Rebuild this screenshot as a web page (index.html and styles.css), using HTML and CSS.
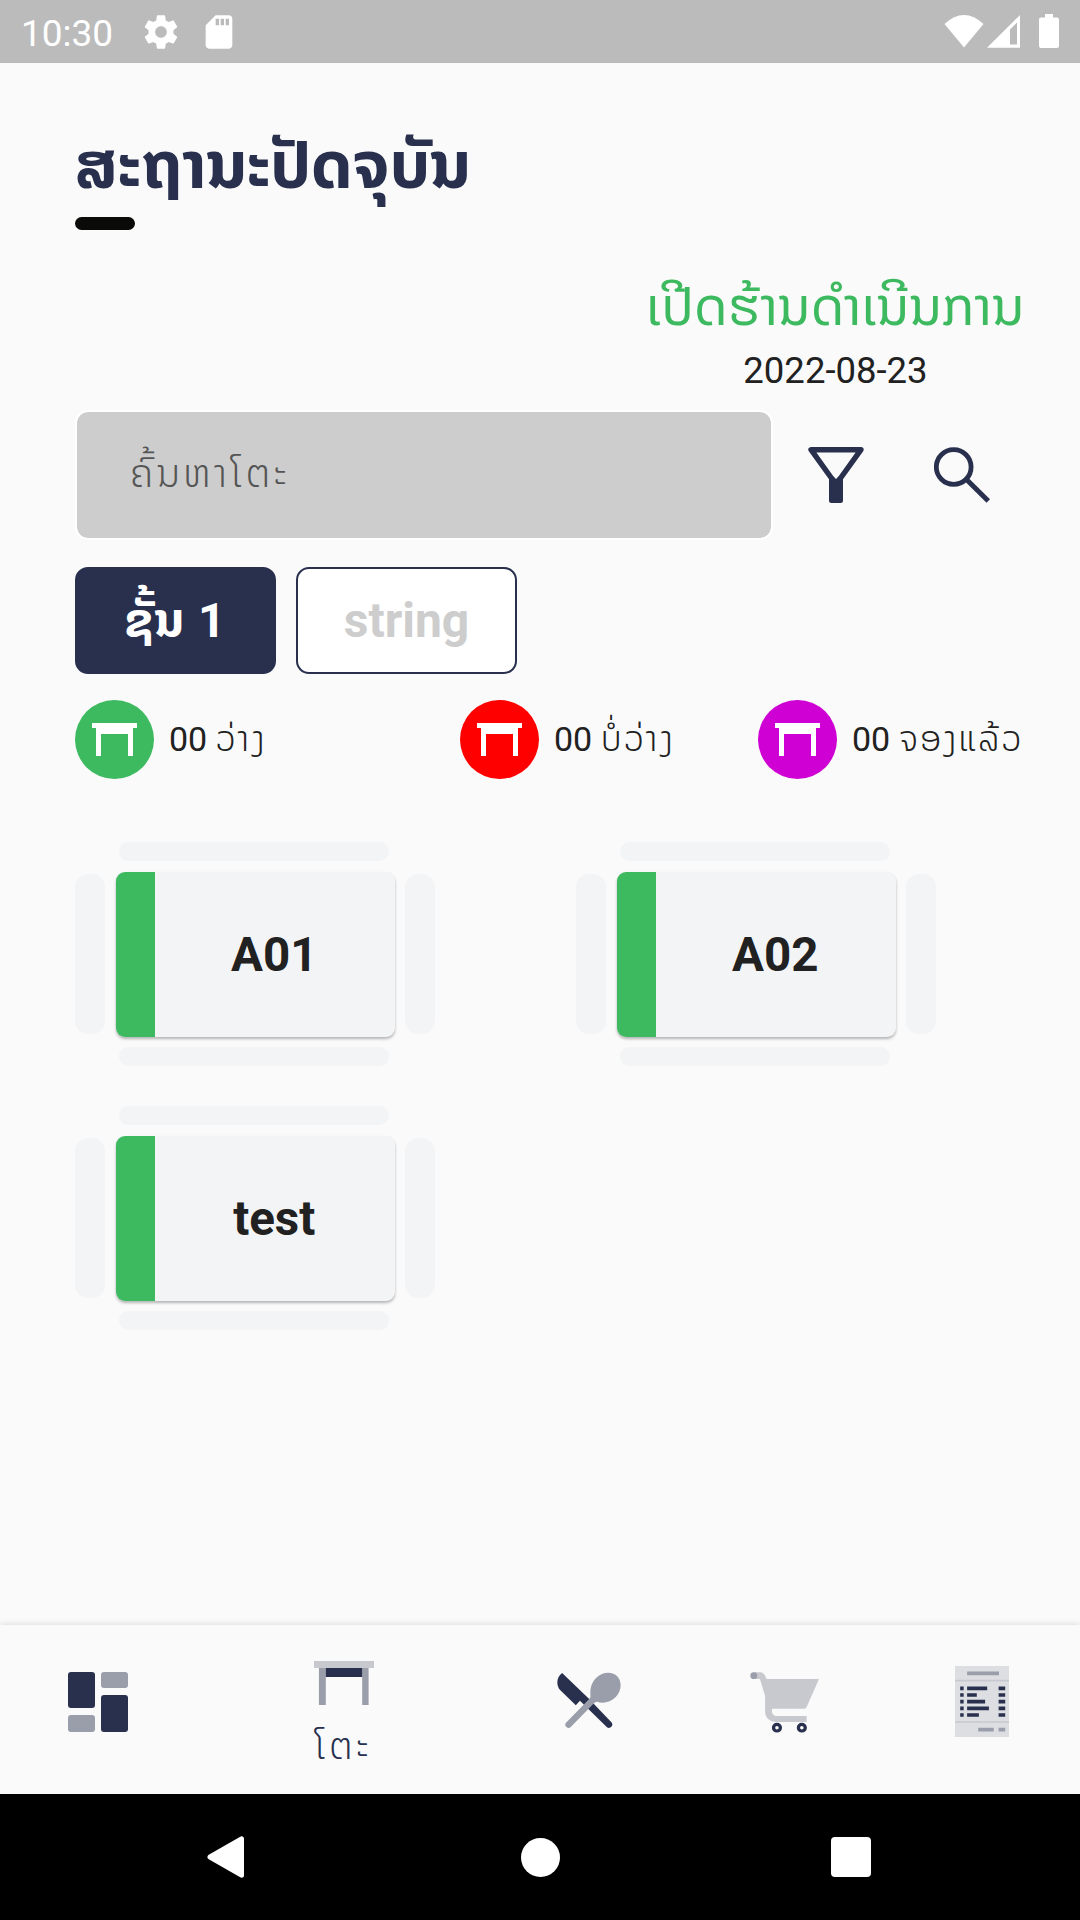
FILE: index.html
```html
<!DOCTYPE html>
<html lang="lo">
<head>
<meta charset="utf-8">
<title>ສະຖານະປັດຈຸບັນ</title>
<link rel="stylesheet" href="styles.css">
</head>
<body>
<svg width="0" height="0" class="defs">
  <symbol id="table" viewBox="0 0 45 33"><path d="M0 0H45V5H41V33H36V11H9V33H4V5H0z" fill="#fff"/></symbol>
</svg>
<div class="screen">
  <header class="status">
    <span class="clock">10:30</span>
    <svg class="gear" width="40" height="40" viewBox="0 0 24 24"><path fill="#fff" d="M19.43 12.98c.04-.32.07-.64.07-.98s-.03-.66-.07-.98l2.11-1.65c.19-.15.24-.42.12-.64l-2-3.46c-.12-.22-.39-.3-.61-.22l-2.49 1c-.52-.4-1.08-.73-1.69-.98l-.38-2.65C14.46 2.18 14.25 2 14 2h-4c-.25 0-.46.18-.49.42l-.38 2.65c-.61.25-1.17.59-1.69.98l-2.49-1c-.23-.09-.49 0-.61.22l-2 3.46c-.13.22-.07.49.12.64l2.11 1.65c-.04.32-.07.65-.07.98s.03.66.07.98l-2.11 1.65c-.19.15-.24.42-.12.64l2 3.46c.12.22.39.3.61.22l2.49-1c.52.4 1.08.73 1.69.98l.38 2.65c.03.24.24.42.49.42h4c.25 0 .46-.18.49-.42l.38-2.65c.61-.25 1.17-.59 1.69-.98l2.49 1c.23.09.49 0 .61-.22l2-3.46c.12-.22.07-.49-.12-.64l-2.11-1.65zM12 15.5c-1.93 0-3.5-1.57-3.5-3.5s1.57-3.5 3.5-3.5 3.5 1.57 3.5 3.5-1.57 3.5-3.5 3.5z"/></svg>
    <svg class="card-icon" width="40" height="40" viewBox="0 0 24 24"><path fill="#fff" d="M18 2h-8L4.02 8 4 20c0 1.100.9 2 2 2h12c1.100 0 2-.9 2-2V4c0-1.100-.9-2-2-2zm-6 6h-2V4h2v4zm3 0h-2V4h2v4zm3 0h-2V4h2v4z"/></svg>
    <svg class="signals" width="116" height="36" viewBox="0 0 116 36"><g fill="#fff"><path d="M0.500 10Q20-8 39.500 10L20 33.500z"/><path fill-rule="evenodd" d="M43 33.700L76 1V33.700zM66 15.500V30.500H73V8.500z"/><path d="M101 0H109V3.500H113Q115 3.500 115 5.500V32Q115 34 113 34H97Q95 34 95 32V5.500Q95 3.500 97 3.500H101z"/></g></svg>
  </header>

  <main class="content">
    <h1 class="title"><span>ສະຖານະປັດຈຸບັນ</span></h1>
    <div class="title-rule"></div>

    <section class="shop">
      <p class="shop-state"><span>ເປີດຮ້ານດຳເນີນການ</span></p>
      <p class="shop-date">2022-08-23</p>
    </section>

    <section class="search">
      <div class="search-box"><span class="lao">ຄົ້ນຫາໂຕະ</span></div>
      <svg class="filter" width="56" height="56" viewBox="0 0 56 56"><path d="M3 2.700H53L33 30.500L28 36L23 30.500z" fill="none" stroke="#28304e" stroke-width="5.400" stroke-linejoin="round"/><path d="M21 31L28 33L35 31V53.500Q35 56 32.500 56H23.500Q21 56 21 53.500z" fill="#28304e"/></svg>
      <svg class="find" width="56" height="56" viewBox="0 0 56 56"><circle cx="19.700" cy="20" r="17.400" fill="none" stroke="#28304e" stroke-width="4.800"/><path d="M32 32L54.300 54" stroke="#28304e" stroke-width="5"/></svg>
    </section>

    <section class="floors">
      <div class="floor active"><span>ຊັ້ນ 1</span></div>
      <div class="floor"><span>string</span></div>
    </section>

    <section class="legend">
      <div class="legend-item"><i class="dot free"><svg width="45" height="33"><use href="#table"/></svg></i><span>00 <span class="lao">ວ່າງ</span></span></div>
      <div class="legend-item"><i class="dot busy"><svg width="45" height="33"><use href="#table"/></svg></i><span>00 <span class="lao">ບໍ່ວ່າງ</span></span></div>
      <div class="legend-item"><i class="dot booked"><svg width="45" height="33"><use href="#table"/></svg></i><span>00 <span class="lao">ຈອງແລ້ວ</span></span></div>
    </section>

    <section class="tables">
      <div class="table"><b class="seat top"></b><b class="seat left"></b><div class="desk"><i></i><span>A01</span></div><b class="seat right"></b><b class="seat bottom"></b></div>
      <div class="table"><b class="seat top"></b><b class="seat left"></b><div class="desk"><i></i><span>A02</span></div><b class="seat right"></b><b class="seat bottom"></b></div>
      <div class="table"><b class="seat top"></b><b class="seat left"></b><div class="desk"><i></i><span>test</span></div><b class="seat right"></b><b class="seat bottom"></b></div>
    </section>
  </main>

  <nav class="tabs">
    <div class="tab">
      <svg width="60" height="60" viewBox="0 0 60 60"><g fill="#28304e"><rect width="27" height="36" rx="3"/><rect x="33" y="23" width="27" height="37" rx="3"/></g><g fill="#9a9eab"><rect x="33" width="27" height="16" rx="3"/><rect y="43" width="27" height="17" rx="3"/></g></svg>
    </div>
    <div class="tab current">
      <svg width="60" height="44" viewBox="0 0 61 44" preserveAspectRatio="none"><path d="M5 6H12V44H5zM49 6H55.500V44H49z" fill="#9a9eab"/><path d="M12 6H49V16H12z" fill="#28304e"/><path d="M0 0H61V7H0z" fill="#c8c9cf"/></svg>
      <span class="lao">ໂຕະ</span>
    </div>
    <div class="tab">
      <svg class="utensils" width="64" height="57" viewBox="49 187 187 171" preserveAspectRatio="none"><path d="M64 190L143 268L208 338C216 347 205 360 195 353L116 273L104 287L58 241C46 226 47 203 64 190z" fill="#28304e"/><path d="M83 345L155 269" stroke="#9a9eab" stroke-width="19" stroke-linecap="round"/><path d="M147 262C145 243 147 222 163 205C182 185 211 184 225 200C239 215 239 243 220 263C206 278 183 283 166 276L154 280L143 270z" fill="#9a9eab"/></svg>
    </div>
    <div class="tab">
      <svg class="cart" width="69" height="61" viewBox="610 183 201 183" preserveAspectRatio="none"><path d="M621 184H640Q653 185 658 204H811L775 288Q773 293 768 293H674V300Q674 314 686 315H775V333H686Q656 330 654 305V255L639 204H621z" fill="#c8c9cf"/><circle cx="621" cy="194" r="10" fill="#9a9eab"/><g fill="#fafafa" stroke="#28304e" stroke-width="9.500"><circle cx="688.500" cy="350" r="10"/><circle cx="761" cy="350" r="10"/></g></svg>
    </div>
    <div class="tab">
      <svg class="receipt" width="54" height="71" viewBox="1205 168 156 213" preserveAspectRatio="none"><path d="M1205 168H1361V381H1205z" fill="#dddee2"/><path d="M1205 212H1361M1205 336H1361" stroke="#c8c9cf" stroke-width="5"/><path d="M1240 190H1332M1272 359H1317M1331 359H1350" stroke="#9a9eab" stroke-width="11"/><path d="M1220 235h10M1240 235h58M1331 235h19M1220 255h10M1240 255h28M1331 255h19M1220 275h10M1240 275h52M1331 275h19M1220 295h10M1240 295h63M1331 295h19M1220 315h10M1240 315h34M1331 315h19" stroke="#28304e" stroke-width="11"/></svg>
    </div>
  </nav>

  <footer class="system">
    <svg width="38" height="42" viewBox="0 0 38 42"><path d="M3 21L34.500 2.800V39.200z" fill="#fff" stroke="#fff" stroke-width="5" stroke-linejoin="round"/></svg>
    <i class="home"></i>
    <i class="recent"></i>
  </footer>
</div>
</body>
</html>
```
FILE: styles.css
```css
* { box-sizing: border-box; margin: 0; padding: 0; }
body { font-family: Roboto, "Noto Sans Lao", sans-serif; color: #212121; background: #fafafa; }
svg { display: block; flex: none; }
.defs { display: none; }
.screen { width: 1080px; height: 1920px; display: flex; flex-direction: column; overflow: hidden; }

.status { height: 63px; flex: none; background: #bbb; display: flex; align-items: center; padding: 0 20px 0 21px; color: #fff; }
.clock { font-size: 37px; line-height: 63px; width: 120px; padding-top: 3px; }
.card-icon { margin-left: 18px; }
.signals { margin-left: auto; }

.content { flex: 1; padding: 57px 58px 0 75px; display: flex; flex-direction: column; }
.content span, .tab span { white-space: nowrap; }
.lao { font-weight: 350; letter-spacing: 2.500px; }
.title { height: 97px; line-height: 91px; font-size: 65.500px; letter-spacing: 0.300px; font-weight: 700; color: #28304e; }
.title-rule { width: 60px; height: 13px; border-radius: 7px; background: #0a0a08; }
.shop { align-self: flex-end; width: 373px; margin-top: 40px; text-align: center; }
.shop-state { height: 72px; line-height: 74px; font-size: 53px; letter-spacing: 0.150px; color: #3dba5f; display: flex; justify-content: center; }
.shop-date { height: 56px; line-height: 58px; font-size: 36.500px; }

.search { display: flex; align-items: center; margin-top: 12px; }
.search-box { width: 698px; height: 130px; border: 2.500px solid #fff; border-radius: 13px; background: #cdcdcd; background-clip: padding-box; padding-left: 53px; font-size: 39px; line-height: 125px; color: #555; }
.search-box .lao { letter-spacing: 3.300px; }
.filter { margin-left: 35px; }
.find { margin-left: 70px; }

.floors { display: flex; gap: 20px; margin-top: 27px; }
.floor { width: 221px; height: 107px; border: 2px solid #28304e; border-radius: 13px; background: #fff; color: #cdcdcd; font-size: 48px; font-weight: 700; line-height: 104px; text-align: center; }
.floor.active { width: 201px; background: #28304e; color: #fff; letter-spacing: 1px; }

.legend { display: flex; margin-top: 26px; }
.legend-item { display: flex; flex: none; align-items: center; gap: 15px; font-size: 34px; line-height: 79px; }
.legend-item .lao { font-size: 35px; }
.legend-item:nth-child(1) { width: 385px; }
.legend-item:nth-child(2) { width: 298px; }
.legend-item:nth-child(3) .lao { letter-spacing: 2px; }
.dot { width: 79px; height: 79px; border-radius: 50%; display: flex; align-items: center; justify-content: center; flex: none; }
.free { background: #3dba5f; }
.busy { background: #f00; }
.booked { background: #cf00d3; }

.tables { display: grid; grid-template-columns: 501px 1fr; row-gap: 40px; margin-top: 63px; }
.table { width: 360px; display: grid; grid-template: ". top ." 19px "left desk right" 166px ". bottom ." 19px / 30px 280px 30px; gap: 10px; align-items: center; }
.seat { background: #f3f4f6; border-radius: 13px; }
.top, .bottom { width: 270px; height: 19px; margin-left: 3.500px; border-radius: 9.500px; }
.top { grid-area: top; }
.bottom { grid-area: bottom; }
.left { grid-area: left; }
.right { grid-area: right; }
.left, .right { height: 160px; }
.desk { grid-area: desk; height: 165px; margin: 1px 0.500px 0 1px; border-radius: 9px; background: #f3f4f6; display: flex; overflow: hidden; box-shadow: 0 2px 3px rgba(0,0,0,.28); }
.desk i { width: 39px; background: #3dba5f; }
.desk span { flex: 1; text-align: center; font-size: 47.500px; font-weight: 700; line-height: 166px; padding-right: 1px; }

.tabs { height: 169px; flex: none; display: flex; background: #fafafa; box-shadow: 0 -1px 6px rgba(0,0,0,.12); }
.tab { width: 196px; display: flex; flex-direction: column; align-items: center; padding-top: 47px; }
.tab.current { width: 295px; padding-top: 36px; }
.tab span { font-size: 37px; line-height: 50px; margin-top: 17px; letter-spacing: 3.500px; color: #28304e; }
.cart { margin-left: -1px; }
.receipt { margin: -6px 0 0 2px; }

.system { height: 126px; flex: none; background: #000; display: grid; grid-template-columns: 313.500px 310.500px 40px; align-items: center; padding-left: 207px; }
.home { width: 39px; height: 39px; border-radius: 50%; background: #fff; }
.recent { width: 40px; height: 40px; border-radius: 4px; background: #fff; }
```
